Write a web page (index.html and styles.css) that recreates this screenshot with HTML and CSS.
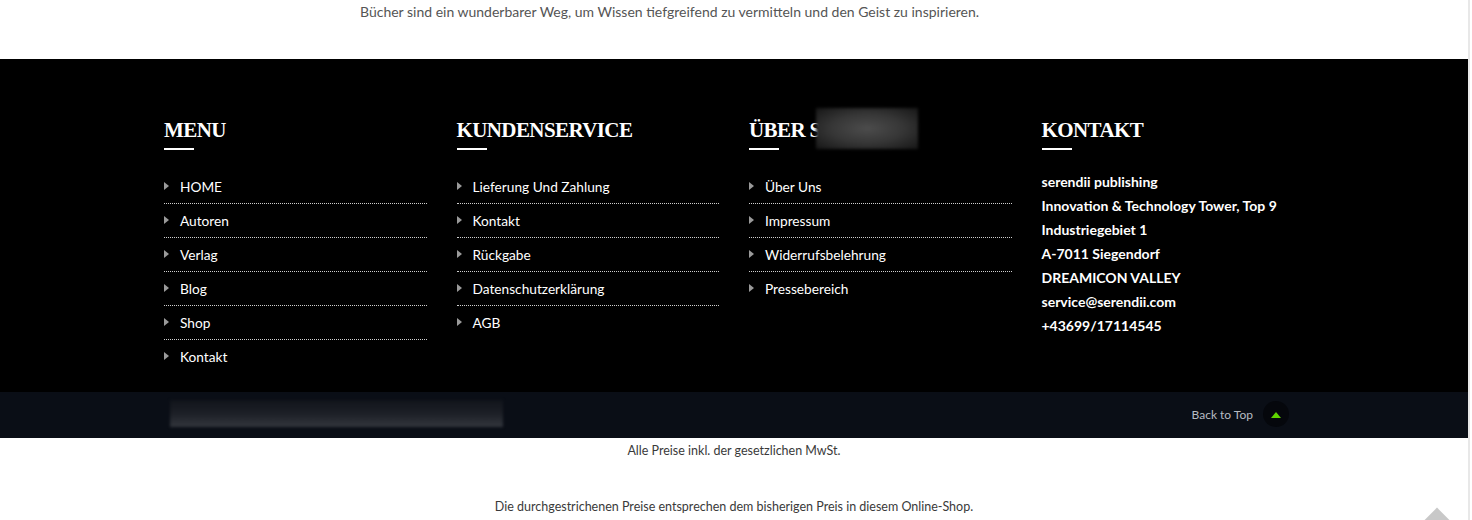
FILE: index.html
```html
<!DOCTYPE html>
<html lang="de">
<head>
<meta charset="utf-8">
<link rel="stylesheet" href="styles.css">
</head>
<body>
<div class="page">
  <p class="intro">Bücher sind ein wunderbarer Weg, um Wissen tiefgreifend zu vermitteln und den Geist zu inspirieren.</p>
  <footer class="footer">
    <div class="container">
      <div class="col">
        <h3 class="title">MENU</h3>
        <ul class="links">
          <li>HOME</li><li>Autoren</li><li>Verlag</li><li>Blog</li><li>Shop</li><li class="last">Kontakt</li>
        </ul>
      </div>
      <div class="col">
        <h3 class="title">KUNDENSERVICE</h3>
        <ul class="links">
          <li>Lieferung Und Zahlung</li><li>Kontakt</li><li>Rückgabe</li><li>Datenschutzerklärung</li><li class="last">AGB</li>
        </ul>
      </div>
      <div class="col">
        <h3 class="title">ÜBER SERENDII<span class="blur-box"></span></h3>
        <ul class="links">
          <li>Über Uns</li><li>Impressum</li><li>Widerrufsbelehrung</li><li class="last">Pressebereich</li>
        </ul>
      </div>
      <div class="col">
        <h3 class="title">KONTAKT</h3>
        <div class="contact">
          <p>serendii publishing</p>
          <p>Innovation &amp; Technology Tower, Top 9</p>
          <p>Industriegebiet 1</p>
          <p>A-7011 Siegendorf</p>
          <p>DREAMICON VALLEY</p>
          <p>service@serendii.com</p>
          <p>+43699/17114545</p>
        </div>
      </div>
    </div>
  </footer>
  <div class="bottombar">
    <div class="bar-inner">
      <div class="copy-blur"></div>
      <div class="backtop">
        <span class="backtop-text">Back to Top</span>
        <span class="backtop-btn"><svg width="10" height="6" viewBox="0 0 10 6"><polygon points="0,6 10,6 5,0" fill="#5fd400"/></svg></span>
      </div>
    </div>
  </div>
  <p class="note note1">Alle Preise inkl. der gesetzlichen MwSt.</p>
  <p class="note note2">Die durchgestrichenen Preise entsprechen dem bisherigen Preis in diesem Online-Shop.</p>
  <div class="scrolltop"></div>
</div>
</body>
</html>
```

FILE: styles.css
```css
* { box-sizing: border-box; }
html, body { margin: 0; padding: 0; }
body {
  background: #fff;
  font-family: Lato, "Liberation Sans", sans-serif;
  overflow: hidden;
}
.page {
  width: 1470px;
  height: 520px;
  border-right: 2px solid #e8e8e8;
  position: relative;
  overflow: hidden;
}
.intro {
  margin: 0;
  height: 59px;
  padding: 4px 0 0 360px;
  font-size: 14px;
  line-height: 16px;
  color: #555;
}
.footer {
  background: #000;
  height: 333px;
  padding-top: 58px;
}
.container {
  width: 1170px;
  margin: 0 auto;
  display: flex;
}
.col {
  width: 292.5px;
  padding: 0 15px;
}
.title {
  margin: 0;
  font-family: "Liberation Serif", "DejaVu Serif", serif;
  font-weight: bold;
  font-size: 21px;
  line-height: 26px;
  color: #fff;
  position: relative;
  padding-bottom: 7px;
  letter-spacing: -0.6px;
}
.title::after {
  content: "";
  display: block;
  width: 30px;
  height: 2px;
  background: #fff;
  position: absolute;
  left: 0;
  bottom: 0;
}
.blur-box {
  position: absolute;
  left: 67px;
  top: -9px;
  width: 102px;
  height: 41px;
  background: radial-gradient(ellipse at center, #4c4c4c 0%, #363636 50%, #161616 100%);
  filter: blur(1.5px);
}
.links {
  list-style: none;
  margin: 0;
  padding: 20px 0 0;
}
.links li {
  position: relative;
  padding-left: 16px;
  height: 34px;
  line-height: 33px;
  font-size: 13.7px;
  color: #fff;
  border-bottom: 1px dotted #cfcfcf;
}
.links li.last { border-bottom: none; }
.links li::before {
  content: "";
  position: absolute;
  left: 0;
  top: 12px;
  border-left: 5px solid #9a9a9a;
  border-top: 4px solid transparent;
  border-bottom: 4px solid transparent;
}
.contact {
  padding-top: 20px;
}
.contact p {
  margin: 0;
  font-size: 14px;
  font-weight: bold;
  line-height: 24px;
  color: #fff;
}
.bottombar {
  background: #0a0e16;
  height: 46px;
}
.bar-inner {
  width: 1170px;
  margin: 0 auto;
  padding: 8px 15px 0 21px;
  display: flex;
  justify-content: space-between;
}
.copy-blur {
  width: 333px;
  height: 27px;
  background: linear-gradient(180deg, #11141b 0%, #1c1f26 50%, #33363d 100%);
  filter: blur(1.5px);
}
.backtop {
  display: flex;
  align-items: center;
  gap: 10px;
  margin-right: 15px;
  height: 28px;
}
.backtop-text {
  font-size: 12px;
  color: #b7bcc3;
}
.backtop-btn {
  width: 26px;
  height: 26px;
  border-radius: 50%;
  background: #05070c;
  display: flex;
  align-items: center;
  justify-content: center;
  padding-top: 2px;
}
.note {
  margin: 0;
  text-align: center;
  font-size: 12.5px;
  color: #3a3a3a;
}
.note1 { padding-top: 6px; line-height: 14px; }
.note2 { padding-top: 42px; line-height: 14px; }
.scrolltop {
  position: absolute;
  left: 1424px;
  top: 513px;
  width: 26px;
  height: 26px;
  transform: rotate(45deg);
  background: #c8c8c8;
}
```
